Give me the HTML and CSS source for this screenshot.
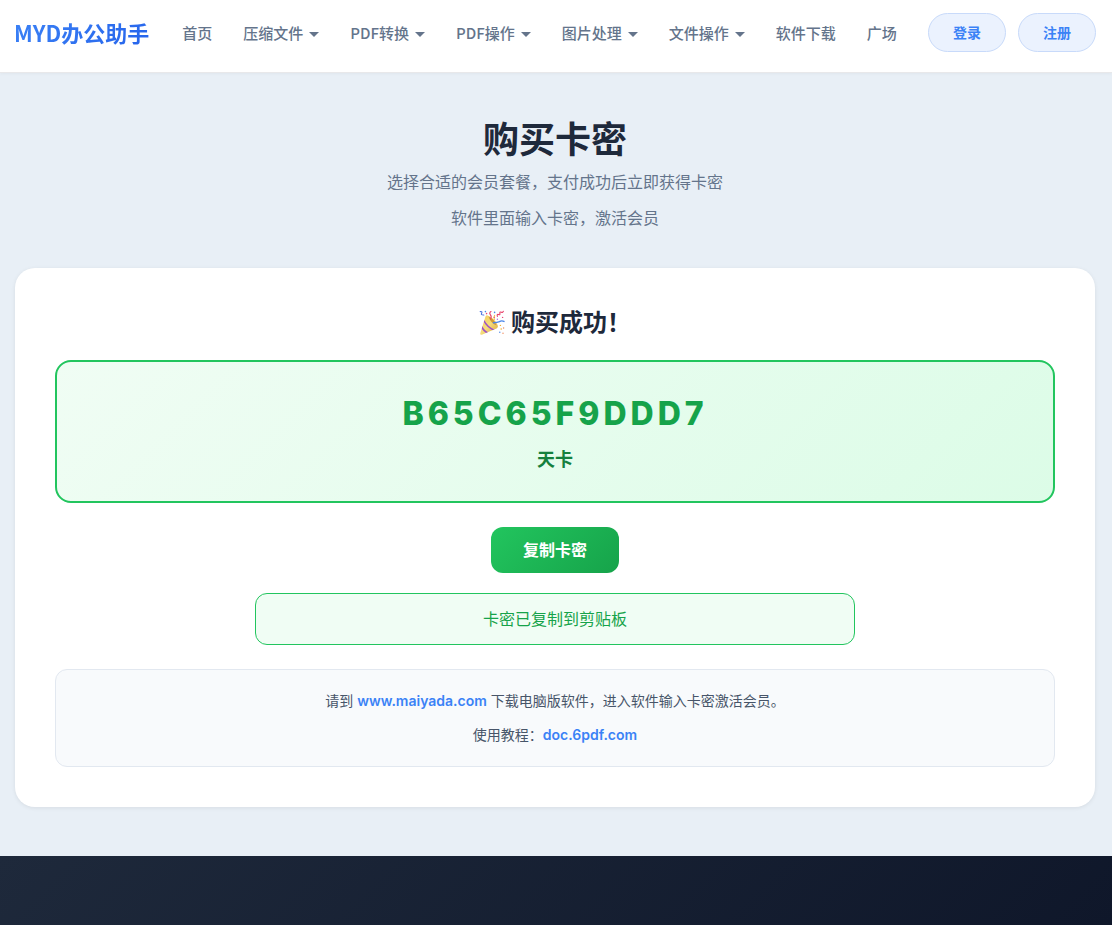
FILE: index.html
```html
<!DOCTYPE html>
<html lang="zh-CN">
<head>
    <meta charset="UTF-8">
    <meta name="viewport" content="width=device-width, initial-scale=1.0">
    <title>购买卡密 - MYD办公助手</title>
    <link rel="stylesheet" href="styles.css">
</head>
<body>

<!-- 顶部导航 -->
<header class="header">
    <a class="logo" href="#">MYD办公助手</a>
    <nav class="nav">
        <a href="#">首页</a>
        <a href="#">压缩文件<span class="caret"></span></a>
        <a href="#">PDF转换<span class="caret"></span></a>
        <a href="#">PDF操作<span class="caret"></span></a>
        <a href="#">图片处理<span class="caret"></span></a>
        <a href="#">文件操作<span class="caret"></span></a>
        <a href="#">软件下载</a>
        <a href="#">广场</a>
    </nav>
    <div class="user-btns">
        <a class="user-btn" href="#">登录</a>
        <a class="user-btn" href="#">注册</a>
    </div>
</header>

<main class="main">
    <div class="page-title">
        <h1>购买卡密</h1>
        <p>选择合适的会员套餐，支付成功后立即获得卡密</p>
        <p>软件里面输入卡密，激活会员</p>
    </div>

    <!-- 购买结果 -->
    <section class="card">
        <h2>
            <svg class="party" viewBox="0 0 26 26" aria-hidden="true">
                <defs>
                    <linearGradient id="cone" x1="0" y1="0" x2="1" y2="1">
                        <stop offset="0" stop-color="#f3cf5a"/>
                        <stop offset="0.5" stop-color="#f6dc7c"/>
                        <stop offset="1" stop-color="#d9a53a"/>
                    </linearGradient>
                    <clipPath id="coneClip">
                        <path d="M8 5.2Q6.8 5.4 6.4 6.8L1.2 23.4Q1 25.2 2.8 24.8L18 18.2Q19.6 17 18.6 15 15.4 7.6 8 5.2Z"/>
                    </clipPath>
                </defs>
                <path d="M8 5.2Q6.8 5.4 6.4 6.8L1.2 23.4Q1 25.2 2.8 24.8L18 18.2Q19.6 17 18.6 15 15.4 7.6 8 5.2Z" fill="url(#cone)"/>
                <g clip-path="url(#coneClip)" fill="none" stroke="#9d50c8" stroke-width="1.6">
                    <path d="M4.8 10.5Q8 17 15.5 20.4"/>
                    <path d="M2.6 16.4Q4.5 21.4 10 23.6"/>
                </g>
                <path d="M9.4 6.4Q15.4 8.6 17.6 15.4 12 13.4 9.4 6.4Z" fill="#d39a35"/>
                <g fill="none" stroke-linecap="round" stroke-width="1.1">
                    <path d="M11.6 9Q13 6.5 11.2 4.4 10 2.6 12 1.6" stroke="#e8436b"/>
                    <path d="M18.4 6.4Q17.6 3.8 19.6 4.6 21.4 5.4 20.8 3 20.8 1.4 22.4 2.2 24 2.8 24.4 1.2" stroke="#e8436b"/>
                    <path d="M14.4 12.8Q18.4 12.6 20.4 11.6 22.6 10.2 25 11.4" stroke="#4a86e8" stroke-width="1.4"/>
                    <path d="M1.2 1.6Q3.8 1.2 2.6 3.2 1.6 5.2 4.8 5" stroke="#4a74e0"/>
                    <path d="M15.6 5.4Q14.4 7.4 15.4 9.4" stroke="#f0c050"/>
                </g>
                <circle cx="6.4" cy="1.6" r=".8" fill="#4a86e8"/>
                <circle cx="7.6" cy="3.6" r=".8" fill="#e84a78"/>
                <circle cx="15.6" cy="2.4" r=".8" fill="#4a86e8"/>
                <circle cx="15.2" cy="7.4" r=".7" fill="#e84a78"/>
                <circle cx="18.4" cy="9.2" r=".7" fill="#b46be0"/>
                <circle cx="23.6" cy="7.4" r=".7" fill="#e84a78"/>
                <circle cx="21.4" cy="15.4" r=".7" fill="#f0b13c"/>
                <circle cx="22.2" cy="19" r=".8" fill="#f0b13c"/>
                <circle cx="24.6" cy="18" r=".7" fill="#f08a5c"/>
                <circle cx="20.8" cy="22.2" r=".7" fill="#4a86e8"/>
                <circle cx="24" cy="23.2" r=".7" fill="#f08a5c"/>
            </svg>
            购买成功！
        </h2>

        <div class="key-box">
            <div class="key-code">B65C65F9DDD7</div>
            <div class="key-type">天卡</div>
        </div>

        <button class="copy-btn" type="button">复制卡密</button>

        <div class="message" role="status">卡密已复制到剪贴板</div>

        <div class="tips">
            <p>请到 <a href="#">www.maiyada.com</a> 下载电脑版软件，进入软件输入卡密激活会员。</p>
            <p>使用教程：<a href="#">doc.6pdf.com</a></p>
        </div>
    </section>
</main>

<footer class="footer"></footer>

</body>
</html>
```
FILE: styles.css
```css
* {
    box-sizing: border-box;
}

body {
    font-family: Inter, "Noto Sans CJK SC", sans-serif;
    background-color: #e8eff6;
    color: #1e293b;
    margin: 0;
    min-height: 100vh;
    display: flex;
    flex-direction: column;
}

h1, h2, p {
    margin: 0;
}

a {
    text-decoration: none;
}

/* 顶部导航 */
.header {
    display: flex;
    align-items: center;
    padding: 13px 16px 20px 14px;
    font-family: "Noto Sans CJK SC", sans-serif;
    background-color: #fff;
    border-bottom: 1px solid #e8e8ea;
    box-shadow: 0 1px 3px rgba(0, 0, 0, 0.04);
    white-space: nowrap;
}

.logo {
    padding-bottom: 2px;
    font-size: 22px;
    font-weight: 700;
    line-height: 32px;
    background: linear-gradient(135deg, #3b82f6, #2563eb);
    -webkit-background-clip: text;
    background-clip: text;
    color: transparent;
}

.nav {
    display: flex;
    gap: 31px;
    margin-left: 33px;
}

.nav a {
    display: flex;
    align-items: center;
    color: #64748b;
    font-size: 15px;
    font-weight: 500;
    line-height: 24px;
}

.caret {
    margin: 4px 0 0 6px;
    border-top: 5px solid;
    border-left: 5px solid transparent;
    border-right: 5px solid transparent;
}

.user-btns {
    display: flex;
    gap: 12px;
    margin-left: auto;
}

.user-btn {
    padding: 8px 24px;
    font-size: 14px;
    font-weight: 600;
    line-height: 21px;
    color: #3b82f6;
    background-color: #ebf2fe;
    border: 1px solid #c8dafa;
    border-radius: 20px;
}

/* 页面标题 */
.main {
    flex: 1;
    padding: 44px 17px 49px 15px;
}

.page-title {
    text-align: center;
    margin-bottom: 32px;
}

.page-title h1 {
    font-size: 36px;
    font-weight: 700;
    line-height: 47px;
}

.page-title p {
    color: #64748b;
    font-size: 16px;
    line-height: 36px;
}

/* 购买结果 */
.card {
    max-width: 1140px;
    margin: 0 auto;
    padding: 40px;
    text-align: center;
    background-color: #fff;
    border-radius: 20px;
    box-shadow: 0 1px 4px rgba(0, 0, 0, 0.08);
}

.card h2 {
    display: flex;
    justify-content: center;
    align-items: center;
    gap: 6px;
    margin-bottom: 22px;
    font-size: 24px;
    font-weight: 600;
    line-height: 30px;
}

.party {
    width: 26px;
    height: 26px;
}

.key-box {
    padding: 28px;
    border: 2px solid #22c55e;
    border-radius: 16px;
    background: linear-gradient(135deg, #f0fdf4, #dcfce7);
}

.key-code {
    color: #16a34a;
    font-size: 32px;
    font-weight: 800;
    letter-spacing: 4px;
    line-height: 48px;
}

.key-type {
    margin-top: 8px;
    color: #15803d;
    font-size: 18px;
    font-weight: 600;
    line-height: 27px;
}

.copy-btn {
    display: block;
    margin: 24px auto 20px;
    padding: 11px 32px;
    font-family: inherit;
    font-size: 16px;
    font-weight: 700;
    line-height: 24px;
    color: #fff;
    background: linear-gradient(135deg, #22c55e, #16a34a);
    border: none;
    border-radius: 12px;
    cursor: pointer;
}

.message {
    max-width: 600px;
    margin: 0 auto 24px;
    padding: 13px;
    color: #16a34a;
    font-size: 16px;
    line-height: 24px;
    background-color: #f0fdf4;
    border: 1px solid #22c55e;
    border-radius: 12px;
}

.tips {
    padding: 14px 20px;
    color: #475569;
    font-size: 14px;
    line-height: 34px;
    background-color: #f8fafc;
    border: 1px solid #e2e8f0;
    border-radius: 12px;
}

.tips a {
    color: #3b82f6;
    font-weight: 600;
}

/* 页脚 */
.footer {
    height: 69px;
    background: linear-gradient(135deg, #1e293b, #0f172a);
}
```
